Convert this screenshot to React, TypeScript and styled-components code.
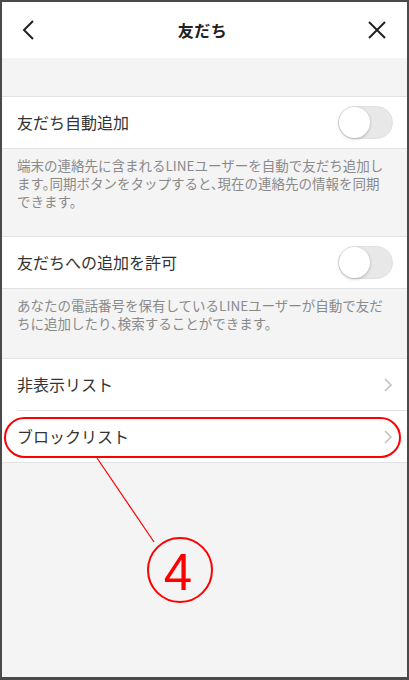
import React from 'react';
import styled, { createGlobalStyle } from 'styled-components';

const GlobalStyle = createGlobalStyle`
  html, body {
    margin: 0;
    padding: 0;
    background: #ffffff;
  }
  body {
    font-family: "Noto Sans CJK JP", "Noto Sans", sans-serif;
  }
`;

const Frame = styled.div`
  position: relative;
  width: 409px;
  height: 680px;
  box-sizing: border-box;
  border: 2px solid #4a4a4a;
  border-bottom-width: 3px;
  background: #f4f4f4;
  overflow: hidden;
  display: flex;
  flex-direction: column;
`;

const Header = styled.div`
  height: 56px;
  background: #ffffff;
  display: flex;
  align-items: center;
  justify-content: space-between;
  padding: 0 18px 0 14px;
`;

const Title = styled.div`
  font-size: 16px;
  font-weight: 700;
  color: #222;
  letter-spacing: 0.5px;
`;

const IconButton = styled.div`
  width: 24px;
  height: 24px;
  display: flex;
  align-items: center;
  justify-content: center;
`;

const Spacer = styled.div`
  height: 38px;
`;

const Row = styled.div<{ $inset?: boolean; $last?: boolean }>`
  height: 51px;
  background: #ffffff;
  display: flex;
  align-items: center;
  justify-content: space-between;
  padding: 0 14px 0 15px;
  border-top: 1px solid ${p => (p.$inset ? 'transparent' : '#e2e2e2')};
  border-bottom: ${p => (p.$last ? '1px solid #e2e2e2' : 'none')};
  position: relative;
  &::before {
    content: '';
    display: ${p => (p.$inset ? 'block' : 'none')};
    position: absolute;
    top: -1px;
    left: 15px;
    right: 0;
    height: 1px;
    background: #e2e2e2;
  }
`;

const Label = styled.span`
  font-size: 16px;
  color: #333;
  margin-top: -2px;
`;

const Note = styled.div`
  border-top: 1px solid #e2e2e2;
  padding: 7px 18px 26px 15px;
  font-size: 13.5px;
  line-height: 18px;
  color: #8a8a8a;
  font-feature-settings: "halt";
`;

const Toggle = styled.div`
  width: 55px;
  height: 33px;
  border-radius: 17px;
  background: #e8e8e8;
  box-sizing: border-box;
  border: 1px solid #e0e0e0;
  position: relative;
  &::after {
    content: '';
    position: absolute;
    top: 0;
    left: 0;
    width: 31px;
    height: 31px;
    border-radius: 50%;
    background: #ffffff;
    box-shadow: 0 1px 3px rgba(0, 0, 0, 0.25);
  }
`;

const Overlay = styled.svg`
  position: absolute;
  left: -2px;
  top: -2px;
  width: 409px;
  height: 680px;
  pointer-events: none;
`;

const Chevron = () => (
  <svg width="10" height="16" viewBox="0 0 10 16">
    <path d="M2 2 L8 8 L2 14" fill="none" stroke="#c2c2c2" strokeWidth="1.6" />
  </svg>
);

const App: React.FC = () => {
  return (
    <>
      <GlobalStyle />
      <Frame>
        <Header>
          <IconButton>
            <svg width="16" height="22" viewBox="0 0 16 22">
              <path d="M13 2 L4 11 L13 20" fill="none" stroke="#222" strokeWidth="2" />
            </svg>
          </IconButton>
          <Title>友だち</Title>
          <IconButton>
            <svg width="18" height="18" viewBox="0 0 18 18">
              <path d="M1 1 L17 17 M17 1 L1 17" fill="none" stroke="#222" strokeWidth="2" />
            </svg>
          </IconButton>
        </Header>
        <Spacer />
        <Row>
          <Label>友だち自動追加</Label>
          <Toggle />
        </Row>
        <Note>
          端末の連絡先に含まれるLINEユーザーを自動で友だち追加します。同期ボタンをタップすると、現在の連絡先の情報を同期できます。
        </Note>
        <Row>
          <Label>友だちへの追加を許可</Label>
          <Toggle />
        </Row>
        <Note>
          あなたの電話番号を保有しているLINEユーザーが自動で友だちに追加したり、検索することができます。
        </Note>
        <Row>
          <Label>非表示リスト</Label>
          <Chevron />
        </Row>
        <Row $inset $last>
          <Label>ブロックリスト</Label>
          <Chevron />
        </Row>
        <Overlay viewBox="0 0 409 680">
          <rect x="5" y="418" width="395" height="39" rx="19.5" fill="none" stroke="#ff0000" strokeWidth="2" />
          <line x1="97" y1="458" x2="154" y2="542" stroke="#ff0000" strokeWidth="1.2" />
          <circle cx="180" cy="570" r="32" fill="none" stroke="#ff0000" strokeWidth="2" />
          <text
            x="178"
            y="590"
            textAnchor="middle"
            fontFamily="'Liberation Sans', Arial, sans-serif"
            fontSize="51"
            fill="#ff0000"
          >
            4
          </text>
        </Overlay>
      </Frame>
    </>
  );
};

export default App;
